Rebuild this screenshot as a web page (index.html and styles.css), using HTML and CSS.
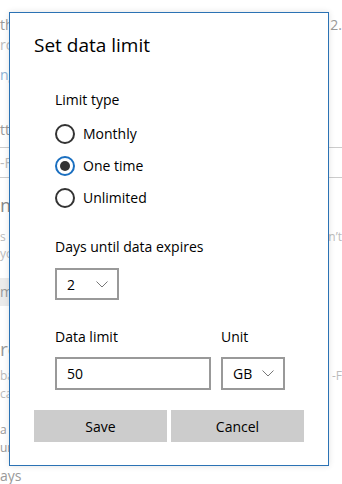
FILE: index.html
```html
<!DOCTYPE html>
<html lang="en">
<head>
  <meta charset="UTF-8" />
  <title>Set data limit</title>
  <link rel="stylesheet" href="styles.css">
</head>
<body>
  <div class="page">
    <div class="bg-row r1"><span>th</span><span>2.</span></div>
    <div class="bg-row r2 faint"><span>rc</span></div>
    <div class="bg-row r3 link"><span>ng</span></div>
    <div class="bg-row r4"><span>tt</span></div>
    <div class="bg-line l1"></div>
    <div class="bg-row r5 faint"><span>-F</span></div>
    <div class="bg-line l2"></div>
    <div class="bg-row r6 heading"><span>m</span></div>
    <div class="bg-row r7 faint small"><span>s</span><span>n’t</span></div>
    <div class="bg-row r8 faint small"><span>yo</span></div>
    <div class="bg-button"><span>m</span></div>
    <div class="bg-row r9 heading"><span>rc</span></div>
    <div class="bg-row r10 faint small"><span>ba</span><span>-F</span></div>
    <div class="bg-row r11 faint small"><span>ca</span></div>
    <div class="bg-row r12 small"><span>a</span></div>
    <div class="bg-row r13 small"><span>ur</span></div>
    <div class="bg-row r14"><span>ays</span></div>
  </div>

  <div class="dialog">
    <h1 class="title">Set data limit</h1>

    <div class="content">
      <div class="label">Limit type</div>
      <div class="radios">
        <label class="radio"><span class="circle"></span>Monthly</label>
        <label class="radio checked"><span class="circle"></span>One time</label>
        <label class="radio"><span class="circle"></span>Unlimited</label>
      </div>

      <div class="label days-label">Days until data expires</div>
      <div class="select days">
        <span>2</span>
        <svg width="12" height="7" viewBox="0 0 12 7"><path d="M0.5 0.5 L6 6 L11.5 0.5" fill="none" stroke="#777" stroke-width="1"/></svg>
      </div>

      <div class="limit-row">
        <div class="limit-col">
          <div class="label">Data limit</div>
          <div class="textbox">50</div>
        </div>
        <div class="unit-col">
          <div class="label">Unit</div>
          <div class="select unit">
            <span>GB</span>
            <svg width="12" height="7" viewBox="0 0 12 7"><path d="M0.5 0.5 L6 6 L11.5 0.5" fill="none" stroke="#777" stroke-width="1"/></svg>
          </div>
        </div>
      </div>
    </div>

    <div class="buttons">
      <button>Save</button>
      <button>Cancel</button>
    </div>
  </div>
</body>
</html>
```

FILE: styles.css
```css
body {
  margin: 0;
  width: 342px;
  height: 484px;
  overflow: hidden;
  background: #fff;
  font-family: 'Open Sans', 'Noto Sans', sans-serif;
  color: #000;
  position: relative;
}

/* settings page behind the dialog */
.page {
  display: flex;
  flex-direction: column;
  color: #999;
  font-size: 14px;
}

.bg-row {
  display: flex;
  justify-content: space-between;
  height: 20px;
  line-height: 20px;
  white-space: nowrap;
}

.faint { color: #bbb; }
.link { color: #8fb3d6; }
.small { font-size: 12px; height: 17px; line-height: 17px; }
.heading { font-size: 19px; color: #888; height: 26px; line-height: 26px; }

.r1 { margin-top: 15px; }
.r3 { margin-top: 10px; }
.r4 { margin-top: 35px; }
.r5 { margin-top: 5px; }
.r6 { margin-top: 14px; }
.r7 { margin-top: 10px; }
.r8 { margin-top: 0; }
.r9 { margin-top: 30px; color: #999; }
.r10 { margin-top: 5px; }
.r11 { margin-top: 1px; }
.r12 { margin-top: 19px; color: #999; }
.r13 { margin-top: 1px; color: #999; }
.r14 { margin-top: 10px; }

.bg-line {
  border-top: 1px solid #ccc;
}

.l1 { margin-top: 7px; }
.l2 { margin-top: 4px; }

.bg-button {
  margin-top: 16px;
  height: 28px;
  line-height: 28px;
  width: 60px;
  background: #ebebeb;
  color: #999;
}

/* dialog */
.dialog {
  position: absolute;
  left: 9px;
  top: 12px;
  width: 320px;
  height: 454px;
  box-sizing: border-box;
  border: 1px solid #2b72b4;
  background: #fff;
  box-shadow: 0 0 6px rgba(0, 0, 0, 0.12);
  padding: 18px 24px 23px;
  display: flex;
  flex-direction: column;
}

.title {
  margin: 0;
  font-size: 19px;
  line-height: 28px;
  font-weight: normal;
}

.content {
  flex: 1;
  padding: 31px 0 0 21px;
}

.label {
  font-size: 14px;
  line-height: 20px;
}

.radios {
  display: flex;
  flex-direction: column;
  gap: 12px;
  margin-top: 14px;
}

.radio {
  display: flex;
  align-items: center;
  gap: 8px;
  font-size: 14px;
  line-height: 20px;
}

.circle {
  width: 20px;
  height: 20px;
  box-sizing: border-box;
  border: 2px solid #333;
  border-radius: 50%;
  display: flex;
  align-items: center;
  justify-content: center;
}

.checked .circle {
  border-color: #1a6fc0;
}

.checked .circle::after {
  content: "";
  width: 10px;
  height: 10px;
  border-radius: 50%;
  background: #333;
}

.days-label {
  margin-top: 29px;
}

.select {
  display: flex;
  align-items: center;
  justify-content: space-between;
  box-sizing: border-box;
  height: 32px;
  border: 2px solid #999;
  padding: 0 9px 0 10px;
  font-size: 14px;
}

.days {
  width: 64px;
  margin-top: 11px;
}

.limit-row {
  display: flex;
  gap: 10px;
  margin-top: 27px;
}

.limit-col .textbox {
  width: 156px;
}

.textbox {
  box-sizing: border-box;
  height: 33px;
  border: 2px solid #999;
  padding: 0 10px;
  line-height: 29px;
  font-size: 14px;
  margin-top: 10px;
}

.unit {
  width: 64px;
  margin-top: 10px;
  height: 33px;
}

.buttons {
  display: flex;
  gap: 4px;
}

button {
  flex: 1;
  height: 32px;
  border: none;
  background: #ccc;
  font-family: inherit;
  font-size: 14px;
  color: #000;
  padding: 0;
}
```
